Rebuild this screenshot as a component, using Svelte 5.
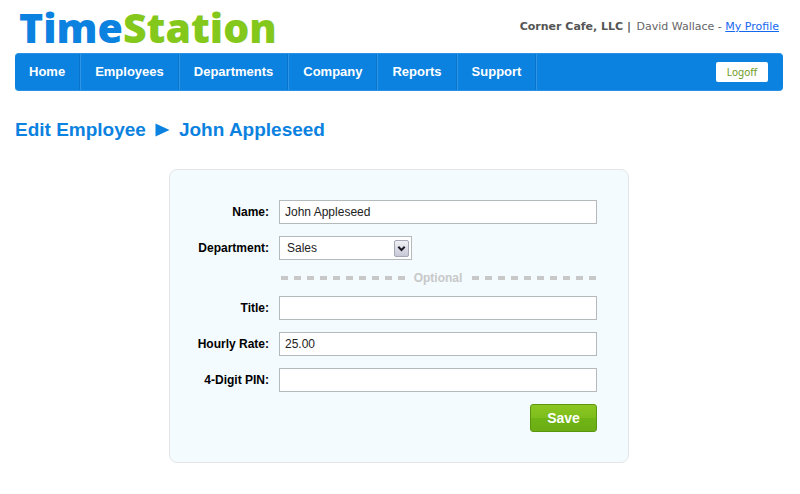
<script lang="ts">
	const links = ['Home', 'Employees', 'Departments', 'Company', 'Reports', 'Support'];
	const departments = ['Sales', 'Kitchen', 'Management'];

	let name = $state('John Appleseed');
	let department = $state('Sales');
	let title = $state('');
	let rate = $state('25.00');
	let pin = $state('');

	function save(e: SubmitEvent) {
		e.preventDefault();
	}
</script>

<div class="page">
	<header class="header">
		<a class="logo" href="/">Time<span>Station</span></a>
		<p class="account">
			<strong>Corner Cafe, LLC |</strong> David Wallace - <a href="/profile">My Profile</a>
		</p>
	</header>

	<nav class="nav">
		<ul>
			{#each links as link}
				<li><a href="/{link.toLowerCase()}">{link}</a></li>
			{/each}
		</ul>
		<button class="logoff" type="button">Logoff</button>
	</nav>

	<main>
		<h1>
			Edit Employee
			<svg width="15" height="14" viewBox="0 0 15 14" aria-hidden="true">
				<path d="M0.5 0.5 14.5 7 0.5 13.5z" fill="#0b82df" />
			</svg>
			John Appleseed
		</h1>

		<form class="card" onsubmit={save}>
			<label for="name">Name:</label>
			<input id="name" type="text" bind:value={name} />

			<label for="department">Department:</label>
			<div class="select">
				<select id="department" bind:value={department}>
					{#each departments as option}
						<option>{option}</option>
					{/each}
				</select>
				<svg width="15" height="17" viewBox="0 0 15 17" aria-hidden="true">
					<defs>
						<linearGradient id="arrow" x1="0" y1="0" x2="0" y2="1">
							<stop offset="0" stop-color="#f1f1f6" />
							<stop offset="1" stop-color="#c6c7d6" />
						</linearGradient>
					</defs>
					<rect x="0.5" y="0.5" width="14" height="16" rx="1.5" fill="url(#arrow)" stroke="#a3a8b4" />
					<path d="M4.3 6.8 7.5 10 10.7 6.8" fill="none" stroke="#1c1c28" stroke-width="2" />
				</svg>
			</div>

			<div class="divider">
				<span class="dashes"></span>
				Optional
				<span class="dashes"></span>
			</div>

			<label for="title">Title:</label>
			<input id="title" type="text" bind:value={title} />

			<label for="rate">Hourly Rate:</label>
			<input id="rate" type="text" bind:value={rate} />

			<label for="pin">4-Digit PIN:</label>
			<input id="pin" type="text" maxlength="4" bind:value={pin} />

			<button class="save" type="submit">Save</button>
		</form>
	</main>
</div>

<style>
	:global(body) {
		background: #fff;
		font-family: 'Liberation Sans', Arial, sans-serif;
	}

	.page {
		padding: 0 17px 24px 15px;
	}

	.header {
		display: flex;
		justify-content: space-between;
		align-items: center;
		height: 53px;
		padding: 0 4px;
	}

	.logo {
		color: #0b82df;
		font-family: 'Open Sans', 'Noto Sans', sans-serif;
		font-size: 41px;
		font-weight: 800;
		line-height: 52px;
		text-decoration: none;
	}

	.logo span {
		color: #84c81c;
	}

	.account {
		margin: 0;
		color: #666;
		font-family: Verdana, 'DejaVu Sans', sans-serif;
		font-size: 11px;
	}

	.account strong {
		margin-right: 2px;
		color: #555;
	}

	.account a {
		color: #1568f0;
	}

	/* Navigation */
	.nav {
		display: flex;
		justify-content: space-between;
		align-items: center;
		box-sizing: border-box;
		height: 38px;
		padding-right: 15px;
		border: 1px solid #2b91e4;
		border-width: 1px 0;
		border-radius: 4px;
		background: #0b82df;
	}

	.nav ul {
		display: flex;
		margin: 0;
		padding: 0;
		list-style: none;
	}

	.nav li {
		margin-right: 1px;
		border-right: 1px solid #0874cb;
		box-shadow: 1px 0 #2f95e6;
	}

	.nav li a {
		display: block;
		padding: 0 14px;
		color: #fff;
		font-size: 13px;
		font-weight: bold;
		line-height: 36px;
		text-decoration: none;
	}

	.logoff {
		width: 52px;
		height: 20px;
		padding: 0;
		border: 0;
		border-radius: 2px;
		background: #fff;
		color: #6b9a1c;
		font-family: 'Noto Sans', sans-serif;
		font-size: 10px;
		cursor: pointer;
	}

	h1 {
		display: flex;
		align-items: center;
		gap: 9px;
		margin: 27px 0;
		color: #0b82df;
		font-size: 19px;
		line-height: 24px;
	}

	/* Form */
	.card {
		display: grid;
		grid-template-columns: 79px 1fr;
		gap: 12px 10px;
		align-items: center;
		box-sizing: border-box;
		max-width: 460px;
		margin: 0 auto;
		padding: 30px 31px 30px 20px;
		border: 1px solid #e2e6e6;
		border-radius: 8px;
		background: #f3fbff;
		font-size: 12px;
	}

	label {
		color: #000;
		font-weight: bold;
		text-align: right;
		white-space: nowrap;
	}

	input,
	select {
		box-sizing: border-box;
		width: 100%;
		height: 24px;
		margin: 0;
		padding: 0 5px;
		border: 1px solid #b4babc;
		border-radius: 0;
		background: #fff;
		color: #222;
		font-family: inherit;
		font-size: 12px;
	}

	select {
		appearance: none;
		padding: 0 7px;
	}

	.select {
		position: relative;
		width: 133px;
		height: 24px;
	}

	.select svg {
		position: absolute;
		top: 4px;
		right: 3px;
		pointer-events: none;
	}

	.divider {
		display: flex;
		grid-column: 2;
		align-items: center;
		gap: 8px;
		height: 12px;
		color: #c8c8c8;
		font-weight: bold;
	}

	.dashes {
		flex: 1;
		height: 4px;
		background: repeating-linear-gradient(90deg, transparent 0 2px, #c8c8c8 2px 9px, transparent 9px 13px);
	}

	.save {
		grid-column: 2;
		justify-self: end;
		width: 67px;
		height: 28px;
		padding: 0;
		border: 1px solid #5b960f;
		border-radius: 3px;
		background: linear-gradient(#8cc722, #7dbd1c 50%, #70b416 50%, #6aae14);
		color: #fff;
		font-family: inherit;
		font-size: 14px;
		font-weight: bold;
		cursor: pointer;
	}
</style>
